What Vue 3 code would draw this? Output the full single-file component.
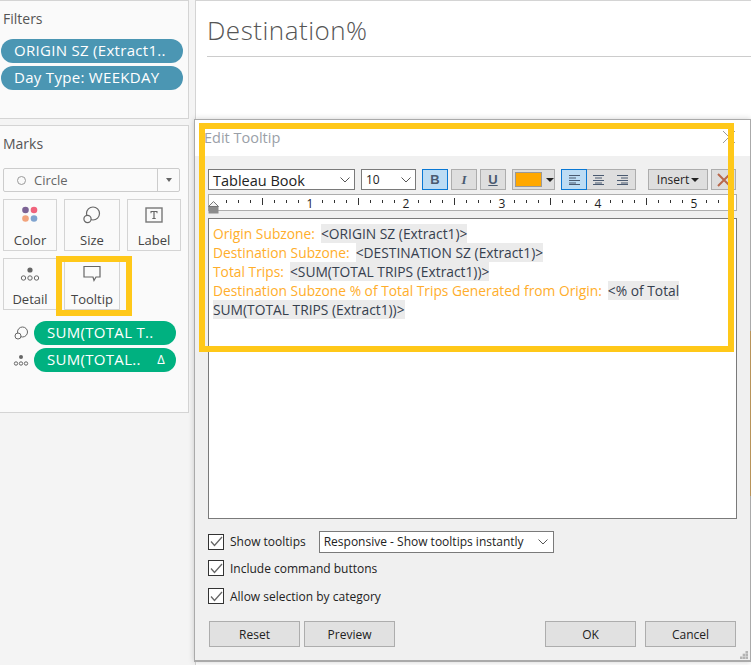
<script setup>
const rulerMarks = []
for (let i = 1; i < 44; i++) {
  const x = i * 12
  if (i % 8 === 0) rulerMarks.push({ x, kind: 'num', label: i / 8 })
  else if (i % 4 === 0) rulerMarks.push({ x, kind: 'half' })
  else rulerMarks.push({ x, kind: 'dot' })
}

const lines = [
  { label: 'Origin Subzone:', tag: '<ORIGIN SZ (Extract1)>' },
  { label: 'Destination Subzone:', tag: '<DESTINATION SZ (Extract1)>' },
  { label: 'Total Trips:', tag: '<SUM(TOTAL TRIPS (Extract1))>' },
  { label: 'Destination Subzone % of Total Trips Generated from Origin:', tag: '<% of Total' },
  { label: '', tag: 'SUM(TOTAL TRIPS (Extract1))>' },
]
</script>

<template>
  <div class="page">
    <aside class="side">
      <section class="card filters">
        <h3>Filters</h3>
        <div class="pill blue">ORIGIN SZ (Extract1..</div>
        <div class="pill blue">Day Type: WEEKDAY</div>
      </section>
      <section class="card marks">
        <h3>Marks</h3>
        <div class="mark-select">
          <span class="ring"></span>
          <span class="mark-name">Circle</span>
          <span class="mark-arrow"><i></i></span>
        </div>
        <div class="mark-grid">
          <div class="mark-btn">
            <svg width="18" height="18" viewBox="0 0 18 18">
              <circle cx="4.5" cy="4" r="3.3" fill="#7b6294" />
              <circle cx="13" cy="4" r="3.3" fill="#f0637c" />
              <circle cx="4.5" cy="12.5" r="3.3" fill="#f2a37c" />
              <circle cx="13" cy="12.5" r="3.3" fill="#7fa3cf" />
            </svg>
            <span>Color</span>
          </div>
          <div class="mark-btn">
            <svg width="20" height="18" viewBox="0 0 20 18" fill="none" stroke="#666" stroke-width="1.2">
              <circle cx="11" cy="7.5" r="6.5" />
              <circle cx="5.5" cy="13" r="3.6" fill="#fafafa" />
            </svg>
            <span>Size</span>
          </div>
          <div class="mark-btn">
            <svg width="18" height="16" viewBox="0 0 18 16">
              <rect x="1" y="1" width="16" height="14" fill="none" stroke="#777" stroke-width="1.4" />
              <path d="M5.5 4h7v2.2h-.8l-.4-1.2H9.6v6h1.1v.9H7.300v-.9h1.100V5H6.700l-.4 1.200h-.8z" fill="#666" />
            </svg>
            <span>Label</span>
          </div>
          <div class="mark-btn">
            <svg width="20" height="16" viewBox="0 0 20 16" fill="none" stroke="#666" stroke-width="1">
              <circle cx="10" cy="4" r="2.6" fill="#666" stroke="none" />
              <circle cx="3.500" cy="12" r="2.200" />
              <circle cx="10" cy="12" r="2.200" />
              <circle cx="16.500" cy="12" r="2.200" />
            </svg>
            <span>Detail</span>
          </div>
          <div class="mark-btn">
            <svg width="20" height="18" viewBox="0 0 20 18" fill="none" stroke="#666" stroke-width="1.2">
              <path d="M2 1.500h16v10.500h-4l-2 3.500-1-3.500H2z" />
            </svg>
            <span>Tooltip</span>
          </div>
        </div>
        <div class="shelf">
          <svg width="16" height="14" viewBox="0 0 16 14" fill="none" stroke="#666" stroke-width="1">
            <circle cx="9.500" cy="6" r="5" />
            <circle cx="5" cy="10" r="3" fill="#fafafa" />
          </svg>
          <div class="pill green">SUM(TOTAL T..</div>
        </div>
        <div class="shelf">
          <svg width="16" height="14" viewBox="0 0 16 14" fill="none" stroke="#666" stroke-width="1">
            <circle cx="8" cy="4" r="2" fill="#666" stroke="none" />
            <circle cx="3" cy="10.500" r="1.700" />
            <circle cx="8" cy="10.500" r="1.700" />
            <circle cx="13" cy="10.500" r="1.700" />
          </svg>
          <div class="pill green split"><span>SUM(TOTAL..</span><span class="delta">Δ</span></div>
        </div>
      </section>
    </aside>

    <main class="sheet">
      <h1>Destination%</h1>
    </main>

    <div class="dialog">
      <header class="dlg-head">
        <span>Edit Tooltip</span>
        <svg class="dlg-close" width="12" height="12" viewBox="0 0 12 12" stroke="#9a9a9a" stroke-width="1">
          <path d="M0 0l12 12M12 0L0 12" />
        </svg>
      </header>
      <div class="dlg-body">
        <div class="toolbar">
          <div class="combo font-combo">
            <span>Tableau Book</span>
            <svg width="10" height="6" viewBox="0 0 10 6" fill="none" stroke="#555"><path d="M.5.500L5 5 9.500.500" /></svg>
          </div>
          <div class="combo size-combo">
            <span>10</span>
            <svg width="10" height="6" viewBox="0 0 10 6" fill="none" stroke="#555"><path d="M.5.500L5 5 9.500.500" /></svg>
          </div>
          <button class="tool on bold">B</button>
          <button class="tool ital">I</button>
          <button class="tool under">U</button>
          <div class="color-btn">
            <span class="swatch"></span>
            <i class="caret"></i>
          </div>
          <div class="align-group">
            <div class="align on">
              <svg width="11" height="10" viewBox="0 0 11 10" stroke="#4a5a70"><path d="M0 .5h11M0 3h7M0 5.500h11M0 8h7M0 9.500h11" /></svg>
            </div>
            <div class="align">
              <svg width="11" height="10" viewBox="0 0 11 10" stroke="#4a5a70"><path d="M0 .5h11M2 3h7M0 5.500h11M2 8h7M0 9.500h11" /></svg>
            </div>
            <div class="align">
              <svg width="11" height="10" viewBox="0 0 11 10" stroke="#4a5a70"><path d="M0 .5h11M4 3h7M0 5.500h11M4 8h7M0 9.500h11" /></svg>
            </div>
          </div>
          <div class="insert">Insert<i class="caret"></i></div>
          <div class="clear">
            <svg width="14" height="14" viewBox="0 0 14 14" stroke="#b9684c" stroke-width="2"><path d="M1 1l12 12M13 1L1 13" /></svg>
          </div>
        </div>

        <div class="ruler">
          <svg class="thumb" width="11" height="13" viewBox="0 0 11 13">
            <path d="M.5 5.500h10v7H.5z" fill="#8c8c8c" />
            <path d="M5.500.5L10.500 5.500H.5z" fill="#f4f4f4" stroke="#777" />
          </svg>
          <template v-for="m in rulerMarks" :key="m.x">
            <span v-if="m.kind === 'num'" class="r-num" :style="{ left: m.x + 'px' }">{{ m.label }}</span>
            <span v-else :class="m.kind === 'half' ? 'r-half' : 'r-dot'" :style="{ left: m.x + 'px' }"></span>
          </template>
        </div>

        <div class="editor">
          <div v-for="(l, i) in lines" :key="i" class="ed-line">
            <span v-if="l.label" class="ed-label">{{ l.label }}</span>
            <span class="ed-tag">{{ l.tag }}</span>
          </div>
        </div>

        <div class="opts">
          <div class="opt first">
            <span class="check"><svg width="13" height="11" viewBox="0 0 13 11" fill="none" stroke="#666" stroke-width="1.300"><path d="M1 5.500l3.500 4L12 1" /></svg></span>
            <span>Show tooltips</span>
            <div class="combo resp-combo">
              <span>Responsive - Show tooltips instantly</span>
              <svg width="10" height="6" viewBox="0 0 10 6" fill="none" stroke="#555"><path d="M.5.500L5 5 9.500.500" /></svg>
            </div>
          </div>
          <div class="opt">
            <span class="check"><svg width="13" height="11" viewBox="0 0 13 11" fill="none" stroke="#666" stroke-width="1.300"><path d="M1 5.500l3.500 4L12 1" /></svg></span>
            <span>Include command buttons</span>
          </div>
          <div class="opt">
            <span class="check"><svg width="13" height="11" viewBox="0 0 13 11" fill="none" stroke="#666" stroke-width="1.300"><path d="M1 5.500l3.500 4L12 1" /></svg></span>
            <span>Allow selection by category</span>
          </div>
        </div>

        <footer class="dlg-foot">
          <button class="btn">Reset</button>
          <button class="btn">Preview</button>
          <span class="grow"></span>
          <button class="btn">OK</button>
          <button class="btn">Cancel</button>
        </footer>
        <svg class="grip" width="8" height="8" viewBox="0 0 8 8" fill="#b4b4b4">
          <rect x="5.500" y="0" width="2.500" height="2.500" />
          <rect x="2.700" y="2.700" width="2.500" height="2.500" />
          <rect x="5.500" y="2.700" width="2.500" height="2.500" />
          <rect x="0" y="5.500" width="2.500" height="2.500" />
          <rect x="2.700" y="5.500" width="2.500" height="2.500" />
          <rect x="5.500" y="5.500" width="2.500" height="2.500" />
        </svg>
      </div>
      <span class="edge-tint"></span>
    </div>

    <div class="mark-hl tooltip-hl"></div>
    <div class="mark-hl dialog-hl"></div>
  </div>
</template>

<style>
html, body { margin: 0; background: #f4f4f4; }
</style>

<style scoped>
.page {
  position: relative;
  width: 751px;
  height: 665px;
  overflow: hidden;
  display: flex;
  gap: 6px;
  background: #f4f4f4;
  font-family: "Open Sans", "Noto Sans", sans-serif;
  color: #333;
}
.side {
  width: 189px;
  display: flex;
  flex-direction: column;
  gap: 6px;
  flex: none;
}
.card {
  background: #fafafa;
  border-right: 1px solid #d4d4d4;
  border-bottom: 1px solid #d4d4d4;
  box-sizing: border-box;
}
.filters {
  height: 119px;
  padding: 9px 0 0 1px;
  border-top: 1px solid #d4d4d4;
}
.marks {
  height: 288px;
  border-top: 1px solid #d4d4d4;
  padding: 9px 0 0 3px;
}
h3 {
  margin: 0;
  font-weight: 400;
  font-size: 14px;
  line-height: 17px;
  color: #555;
}
.filters h3 { margin: 0 0 12px 2px; }
.marks h3 { margin-bottom: 16px; }
.pill {
  height: 24px;
  line-height: 23px;
  border-radius: 12px;
  color: #fff;
  font-size: 15px;
  letter-spacing: .3px;
  white-space: nowrap;
  box-sizing: border-box;
}
.pill.blue {
  width: 182px;
  padding-left: 13px;
  margin-bottom: 3px;
  background: #4b96b3;
}
.pill.green {
  width: 142px;
  padding-left: 13px;
  background: #00b180;
}
.pill.split {
  display: flex;
  justify-content: space-between;
  padding-right: 11px;
}
.delta { font-size: 13px; }
.mark-select {
  width: 177px;
  height: 24px;
  box-sizing: border-box;
  border: 1px solid #ccc;
  border-radius: 2px;
  display: flex;
  align-items: center;
  font-size: 13px;
  color: #666;
  padding-left: 13px;
}
.ring {
  width: 7px;
  height: 7px;
  border: 1px solid #999;
  border-radius: 50%;
  margin-right: 8px;
}
.mark-name { flex: 1; }
.mark-arrow {
  width: 21px;
  height: 22px;
  border-left: 1px solid #ccc;
  display: flex;
  align-items: center;
  justify-content: center;
}
.mark-arrow i {
  border: 3px solid transparent;
  border-top: 4px solid #666;
  border-bottom: 0;
}
.mark-grid {
  display: grid;
  grid-template-columns: 54px 56px 54px;
  column-gap: 7px;
  row-gap: 7px;
  margin: 7px 0 11px;
}
.mark-btn {
  height: 52px;
  box-sizing: border-box;
  border: 1px solid #d4d4d4;
  display: flex;
  flex-direction: column;
  align-items: center;
  padding-top: 6px;
  font-size: 13px;
  color: #444;
}
.mark-btn svg { height: 18px; }
.mark-btn span { margin-top: 8px; line-height: 17px; }
.shelf {
  display: flex;
  align-items: center;
  gap: 14px;
  margin-bottom: 3px;
  margin-left: 10px;
}
.shelf svg { margin-left: 0; margin-right: -9px; }
.sheet {
  flex: 1;
  background: #fff;
  border-left: 1px solid #d4d4d4;
  border-top: 1px solid #d4d4d4;
  padding: 0 0 0 11px;
}
h1 {
  margin: 0;
  height: 55px;
  line-height: 58px;
  font-weight: 300;
  font-size: 26px;
  letter-spacing: .5px;
  color: #555;
  border-bottom: 1px solid #ccc;
}
.dialog {
  position: absolute;
  left: 194px;
  top: 119px;
  width: 557px;
  height: 543px;
  box-sizing: border-box;
  border: 1px solid #aaa;
  border-bottom-width: 2px;
  background: #f0f0f0;
  display: flex;
  flex-direction: column;
  box-shadow: 0 0 6px rgba(0, 0, 0, .18);
}
.dlg-head {
  height: 36px;
  flex: none;
  background: #fff;
  display: flex;
  align-items: center;
  justify-content: space-between;
  padding: 0 15px 2px 9px;
  box-sizing: border-box;
  font-size: 14.5px;
  color: #9aa0a8;
}
.dlg-close { margin-top: -1px; }
.dlg-body {
  position: relative;
  flex: 1;
  padding: 13px 13px 0 13px;
  font-size: 12px;
  color: #222;
}
.toolbar {
  display: flex;
  align-items: stretch;
  height: 21px;
}
.combo {
  box-sizing: border-box;
  border: 1px solid #7a7a7a;
  background: #fff;
  display: flex;
  align-items: center;
  justify-content: space-between;
  padding: 0 4px;
  white-space: nowrap;
}
.font-combo { width: 147px; font-size: 14.5px; margin-right: 6px; padding-top: 1px; }
.size-combo { width: 55px; font-size: 12px; margin-right: 6px; }
.tool {
  width: 26px;
  margin: 0 3px 0 0;
  padding: 0;
  box-sizing: border-box;
  border: 1px solid #adadad;
  background: #dedede;
  font-family: "Liberation Serif", serif;
  font-size: 13px;
  font-weight: 700;
  color: #4a5a70;
}
.tool.bold { font-family: "Liberation Sans", sans-serif; }
.tool.ital { font-style: italic; }
.tool.under { text-decoration: underline; font-family: "Liberation Sans", sans-serif; }
.tool.on { background: #bcdcf4; border-color: #0a78d4; }
.color-btn {
  width: 43px;
  margin: 0 6px 0 3px;
  box-sizing: border-box;
  border: 1px solid #adadad;
  background: #dedede;
  display: flex;
  align-items: center;
  padding-left: 2px;
  gap: 4px;
}
.swatch {
  width: 27px;
  height: 15px;
  box-sizing: border-box;
  border: 1px solid #999;
  background: #ffa800;
}
.caret {
  display: inline-block;
  border: 4px solid transparent;
  border-top: 4px solid #222;
  border-bottom: 0;
}
.align-group {
  display: flex;
  width: 75px;
  box-sizing: border-box;
  border: 1px solid #adadad;
  background: #dedede;
  margin-right: 12px;
}
.align {
  flex: 1;
  display: flex;
  align-items: center;
  justify-content: center;
}
.align.on {
  background: #bcdcf4;
  outline: 1px solid #0a78d4;
  outline-offset: 0;
}
.insert {
  width: 60px;
  box-sizing: border-box;
  border: 1px solid #adadad;
  background: #dedede;
  display: flex;
  align-items: center;
  justify-content: center;
  gap: 2px;
  margin-right: 3px;
  color: #222;
}
.clear {
  width: 25px;
  box-sizing: border-box;
  border: 1px solid #adadad;
  background: #dedede;
  display: flex;
  align-items: center;
  justify-content: center;
}
.ruler {
  position: relative;
  margin-top: 4px;
  height: 17px;
  box-sizing: border-box;
  border: 1px solid #adadad;
  background: #fff;
}
.thumb { position: absolute; left: -1px; top: 6px; }
.r-dot, .r-half, .r-num { position: absolute; }
.r-dot { width: 1px; height: 3px; top: 5px; background: #333; margin-left: 5px; }
.r-half { width: 1px; height: 7px; top: 3px; background: #333; margin-left: 5px; }
.r-num {
  top: 0;
  width: 12px;
  margin-left: -1px;
  text-align: center;
  font-size: 12px;
  line-height: 17px;
  color: #222;
}
.editor {
  margin-top: 7px;
  height: 301px;
  box-sizing: border-box;
  border: 1px solid #7a7a7a;
  background: #fff;
  padding: 5px 0 0 4px;
  font-size: 13.8px;
  line-height: 19px;
}
.ed-line { height: 19px; white-space: nowrap; }
.ed-label { color: #ffae2b; margin-right: 6px; }
.ed-tag { background: #ebebeb; color: #36404e; display: inline-block; }
.opts { margin-top: 12px; }
.opt {
  display: flex;
  align-items: center;
  height: 16px;
  margin-bottom: 12px;
  white-space: nowrap;
}
.opt.first { height: 21px; margin-bottom: 8px; }
.check {
  width: 16px;
  height: 16px;
  box-sizing: border-box;
  border: 1px solid #333;
  background: #fff;
  display: flex;
  align-items: center;
  justify-content: center;
  margin-right: 6px;
}
.resp-combo {
  width: 235px;
  height: 22px;
  margin-left: 13px;
  padding-right: 5px;
}
.dlg-foot {
  display: flex;
  gap: 4px;
  margin-top: 17px;
  padding: 0 1px;
}
.grow { flex: 1; }
.btn {
  width: 91px;
  height: 26px;
  margin: 0;
  padding: 0;
  box-sizing: border-box;
  border: 1px solid #adadad;
  background: #e1e1e1;
  font-family: inherit;
  font-size: 12px;
  color: #222;
}
.dlg-foot .btn:nth-last-child(2) { margin-right: 5px; }
.grip { position: absolute; right: 2px; bottom: 1px; }
.edge-tint {
  position: absolute;
  right: -1px;
  top: 211px;
  width: 1px;
  height: 165px;
  background: #b8935a;
}
.mark-hl {
  position: absolute;
  box-sizing: border-box;
  border: 6px solid #ffc819;
  pointer-events: none;
}
.tooltip-hl { left: 56px; top: 256px; width: 76px; height: 60px; }
.dialog-hl { left: 199px; top: 123px; width: 535px; height: 229px; }
</style>
